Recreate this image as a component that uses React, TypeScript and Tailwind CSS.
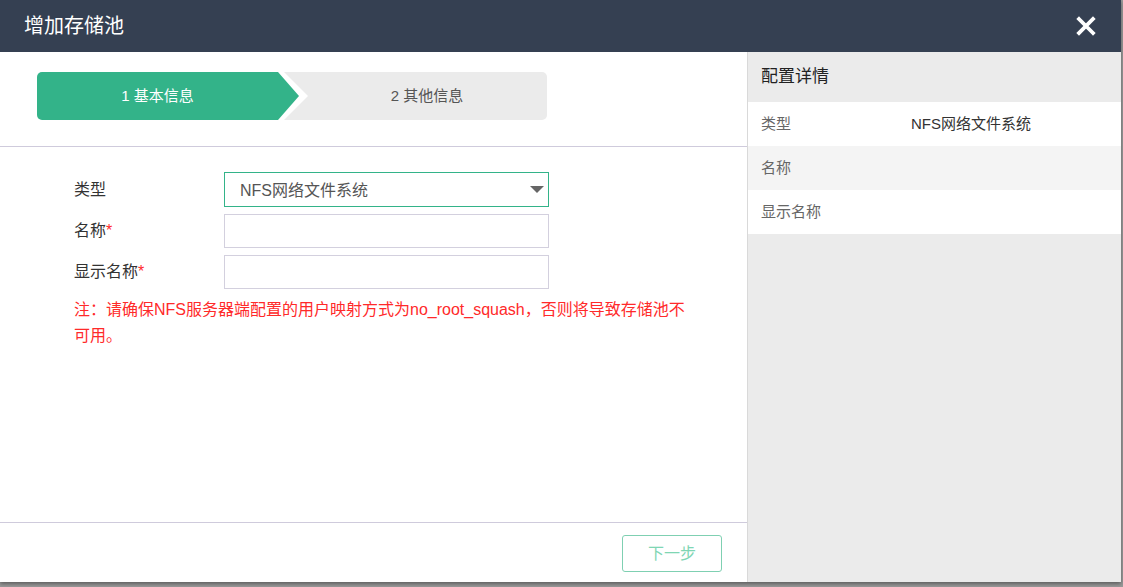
import React from 'react';

const FONT = "font-['Liberation_Sans','Noto_Sans_CJK_SC',sans-serif]";

export default function App() {
  return (
    <div className={`w-[1123px] h-[587px] bg-[#9a9a9a] overflow-hidden ${FONT}`}>
      <div className="w-[1121px] h-[582px] bg-white flex flex-col shadow-[0_2px_4px_rgba(0,0,0,0.4)]">
        <div className="h-[52px] shrink-0 bg-[#354052] flex items-center justify-between pl-6 pr-[25px]">
          <h1 className="text-white text-[20px] leading-none">增加存储池</h1>
          <button className="w-5 h-5 flex items-center justify-center">
            <svg width="20" height="20" viewBox="0 0 20 20">
              <path d="M3 3 L17 17 M17 3 L3 17" stroke="#fff" strokeWidth="3.8" strokeLinecap="square" />
            </svg>
          </button>
        </div>

        <div className="flex flex-1 min-h-0">
          <div className="w-[748px] shrink-0 flex flex-col border-r border-[#d9d9d9]">
            <div className="h-[95px] shrink-0 pt-5 pl-[37px] border-b border-[#cfcbdc]">
              <Steps />
            </div>

            <div className="flex-1 pt-[25px] pl-[74px]">
              <Row label="类型">
                <div className="w-[325px] h-[35px] border border-[#33b389] flex items-center justify-between pl-[15px] pr-[3px]">
                  <span className="text-[16px] text-[#555] leading-none pt-[3px]">NFS网络文件系统</span>
                  <svg width="14" height="8" viewBox="0 0 14 8" className="mr-[1px]">
                    <path d="M0 0 H14 L7 7 Z" fill="#666" />
                  </svg>
                </div>
              </Row>
              <Row label="名称" required>
                <input className="w-[325px] h-[34px] border border-[#d3d0de] outline-none px-2 text-sm" />
              </Row>
              <Row label="显示名称" required>
                <input className="w-[325px] h-[34px] border border-[#d3d0de] outline-none px-2 text-sm" />
              </Row>
              <p className="mt-[8px] w-[615px] text-[16px] leading-[26px] text-[#ff2a2a]">
                注：请确保NFS服务器端配置的用户映射方式为no_root_squash，否则将导致存储池不可用。
              </p>
            </div>

            <div className="h-[60px] shrink-0 border-t border-[#cfcbdc] flex justify-end items-start pt-[12px] pr-[25px]">
              <button className="w-[100px] h-[37px] border border-[#7fd0b2] rounded-[3px] text-[16px] text-[#7fd6b4]">
                下一步
              </button>
            </div>
          </div>

          <div className="flex-1 bg-[#ebebeb]">
            <div className="h-[50px] flex items-center pl-[13px] text-[17px] text-[#222]">配置详情</div>
            <Detail label="类型" value="NFS网络文件系统" bg="bg-white" />
            <Detail label="名称" value="" bg="bg-[#f4f4f4]" />
            <Detail label="显示名称" value="" bg="bg-white" />
          </div>
        </div>
      </div>
    </div>
  );
}

function Steps() {
  return (
    <div className="relative flex w-[510px] h-12 rounded-[5px] bg-[#ebebeb]">
      <svg width="272" height="48" viewBox="0 0 272 48" className="absolute left-0 top-0">
        <path d="M0 0 H247 L271 24 L247 48 H0 Z" fill="#fff" />
        <path d="M5 0 H241 L262 24 L241 48 H5 A5 5 0 0 1 0 43 V5 A5 5 0 0 1 5 0 Z" fill="#33b389" />
      </svg>
      <div className="relative w-[241px] flex items-center justify-center text-[15px] text-white">1 基本信息</div>
      <div className="relative ml-[29px] flex-1 flex items-center justify-center text-[15px] text-[#555]">2 其他信息</div>
    </div>
  );
}

function Row({ label, required, children }: { label: string; required?: boolean; children: React.ReactNode }) {
  return (
    <div className="flex items-center mb-[7px]">
      <div className="w-[150px] text-[16px] text-[#333]">
        {label}
        {required && <span className="text-[#ff2a2a]">*</span>}
      </div>
      {children}
    </div>
  );
}

function Detail({ label, value, bg }: { label: string; value: string; bg: string }) {
  return (
    <div className={`h-11 flex items-center pl-[13px] text-[15px] ${bg}`}>
      <span className="w-[150px] text-[#666]">{label}</span>
      <span className="text-[#333]">{value}</span>
    </div>
  );
}
